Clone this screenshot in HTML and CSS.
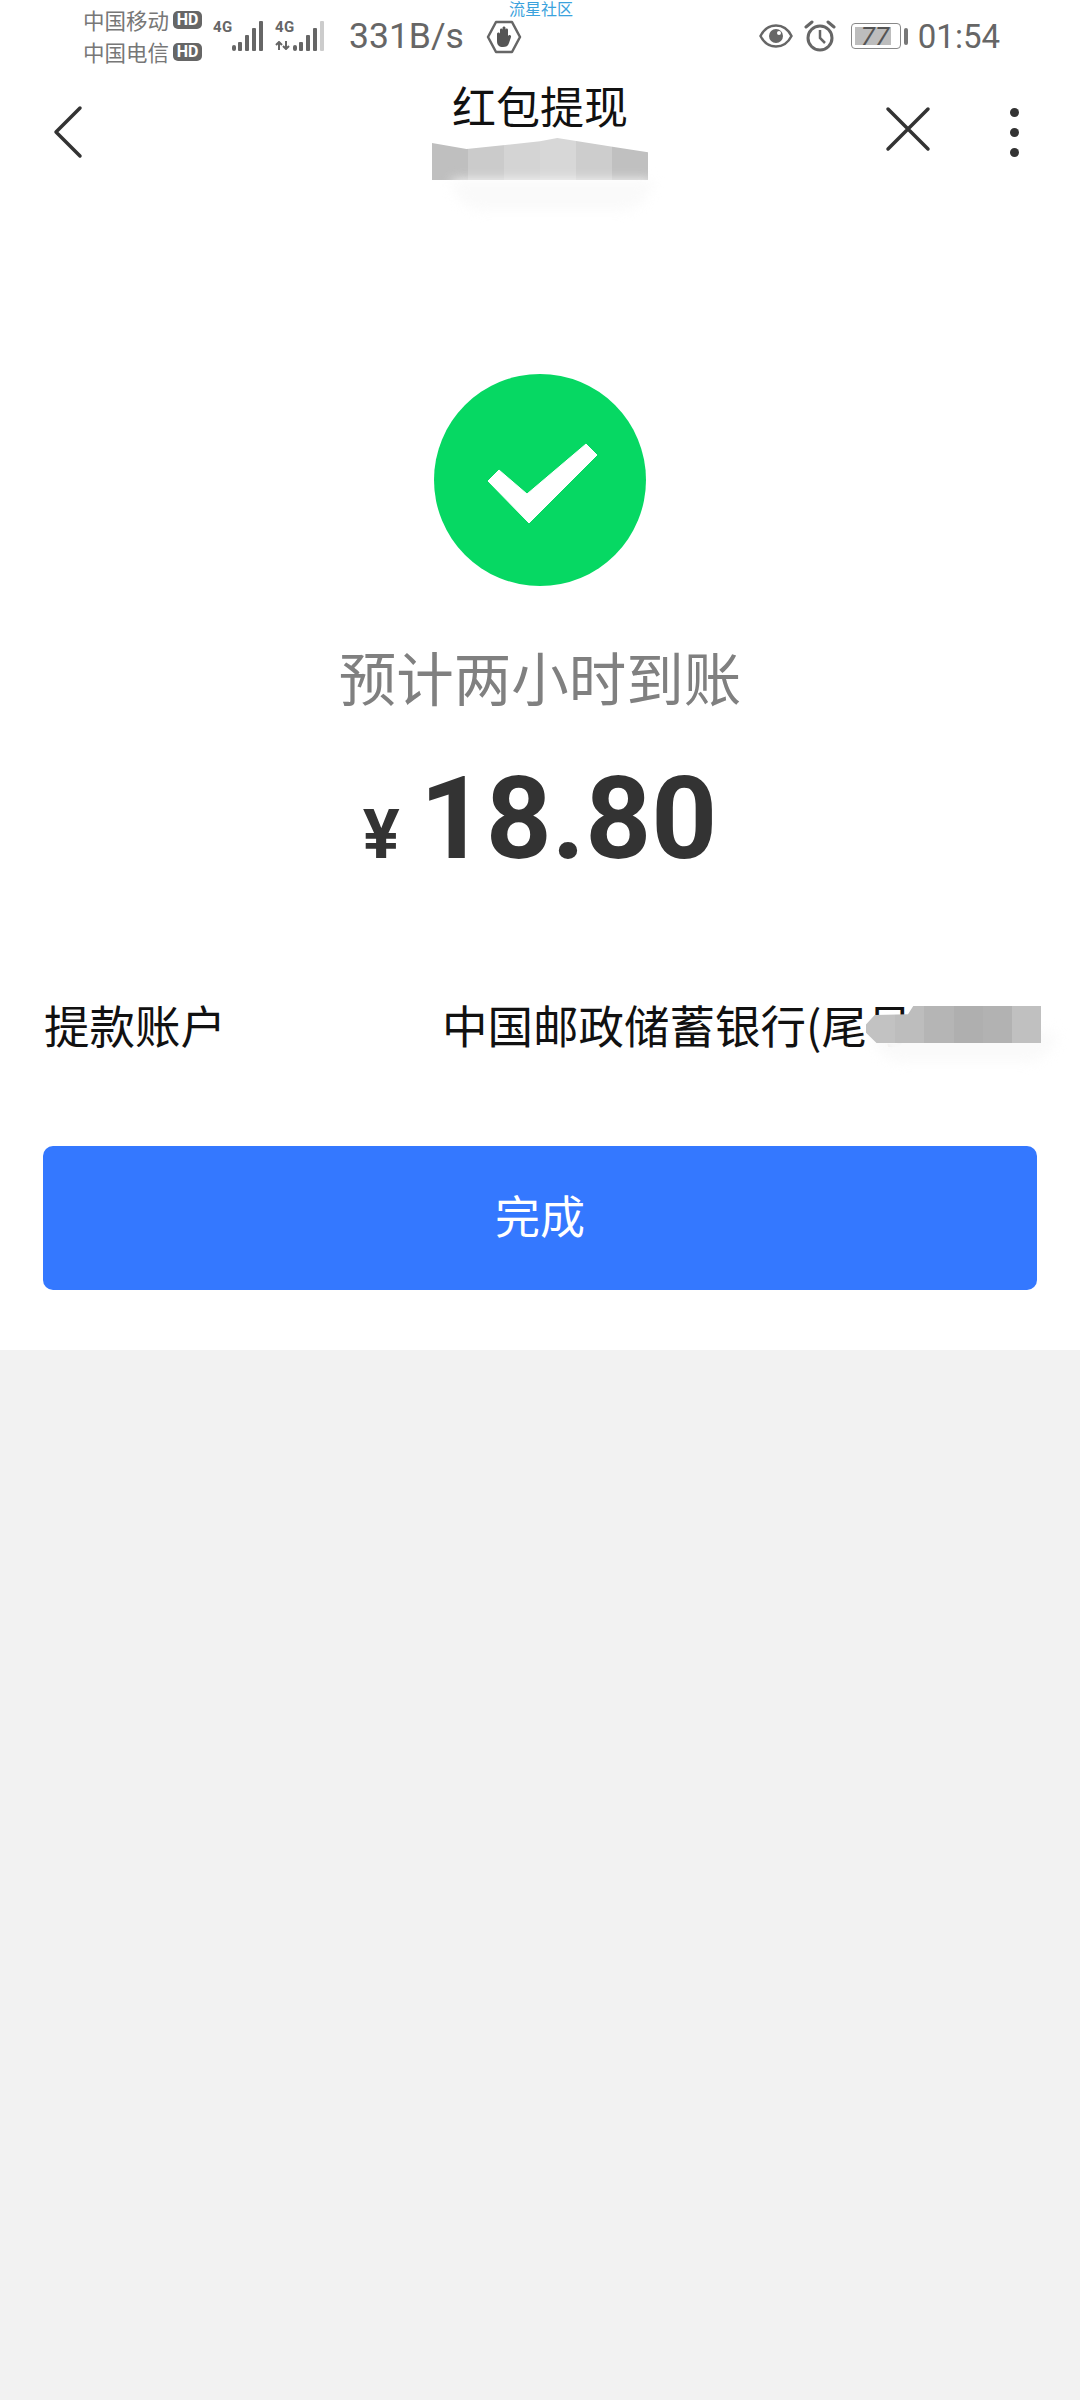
FILE: index.html
```html
<!DOCTYPE html>
<html>
<head>
  <title>红包提现</title>
  <meta name="viewport" content="width=device-width, initial-scale=1.0">
  <link rel="stylesheet" href="styles.css">
</head>
<body>
  <div class="sheet">
    <div class="watermark">流星社区</div>
    <div class="status-bar">
      <div class="carriers">
        <div class="carrier">中国移动<span class="hd">HD</span></div>
        <div class="carrier">中国电信<span class="hd">HD</span></div>
      </div>
      <div class="signal">
        <span class="net">4G</span>
        <svg width="32" height="32" viewBox="0 0 32 32">
          <rect x="1" y="26" width="4" height="6" rx="2" fill="#666"/>
          <rect x="7" y="23" width="4" height="9" rx="1" fill="#666"/>
          <rect x="14" y="16" width="4" height="16" rx="1" fill="#666"/>
          <rect x="21" y="9" width="4" height="23" rx="1" fill="#666"/>
          <rect x="28" y="2" width="4" height="30" rx="1" fill="#666"/>
        </svg>
      </div>
      <div class="signal signal-two">
        <span class="net">4G</span>
        <svg class="arrows" width="17" height="9" viewBox="0 0 17 9">
          <path d="M4 9V1M1 4l3-3 3 3M11 0v8M8 5l3 3 3-3" stroke="#666" stroke-width="2" fill="none"/>
        </svg>
        <svg width="32" height="32" viewBox="0 0 32 32">
          <rect x="1" y="26" width="4" height="6" rx="2" fill="#666"/>
          <rect x="7" y="23" width="4" height="9" rx="1" fill="#666"/>
          <rect x="14" y="16" width="4" height="16" rx="1" fill="#666"/>
          <rect x="21" y="9" width="4" height="23" rx="1" fill="#666"/>
          <rect x="28" y="2" width="4" height="30" rx="1" fill="#ccc"/>
        </svg>
      </div>
      <div class="speed">331B/s</div>
      <svg class="hand" width="36" height="34" viewBox="0 0 36 34">
        <path d="M10 2h16l8 15-8 15H10L2 17z" fill="none" stroke="#666" stroke-width="2.5" stroke-linejoin="round"/>
        <path d="M11 14c0-2 3-2 3 0v-4c0-2 2.500-2 2.500 0V8c0-2 3-2 3 0v2c0-2 2.500-2 2.500 0v6c1-2 3.500-1 3 1l-2 6c-1 3-3 4-6 4-4 0-6-2-6-6z" fill="#555"/>
      </svg>
      <div class="status-right">
        <svg class="eye" width="34" height="26" viewBox="0 0 34 26">
          <path d="M1.500 13C5 6 10.500 2.500 17 2.500S29 6 32.500 13C29 20 23.500 23.500 17 23.500S5 20 1.500 13z" fill="none" stroke="#666" stroke-width="2.500"/>
          <circle cx="17" cy="13" r="7" fill="#666"/>
          <circle cx="20" cy="10" r="2" fill="#fff"/>
        </svg>
        <svg class="alarm" width="32" height="32" viewBox="0 0 32 32">
          <circle cx="16" cy="18" r="12" fill="none" stroke="#666" stroke-width="3"/>
          <path d="M16 10v8l5 5" fill="none" stroke="#666" stroke-width="2.500"/>
          <path d="M2 7l6-5M30 7l-6-5" stroke="#666" stroke-width="3" stroke-linecap="round"/>
        </svg>
        <div class="battery">
          <div class="battery-fill"></div>
          <span class="battery-text">77</span>
        </div>
        <div class="battery-nub"></div>
        <div class="clock">01:54</div>
      </div>
    </div>

    <div class="nav">
      <svg class="back" width="30" height="54" viewBox="0 0 30 54">
        <path d="M27 3L3 27l24 24" fill="none" stroke="#333" stroke-width="3.500" stroke-linecap="round" stroke-linejoin="round"/>
      </svg>
      <div class="nav-title">
        <div class="title">红包提现</div>
        <div class="mosaic mosaic-title">
          <i style="background:#bfbfbf"></i>
          <i style="background:#cbcbcb"></i>
          <i style="background:#d4d4d4"></i>
          <i style="background:#d7d7d7"></i>
          <i style="background:#cdcdcd"></i>
          <i style="background:#c0c0c0"></i>
        </div>
        <div class="smudge smudge-title"></div>
      </div>
      <div class="nav-actions">
        <svg width="46" height="46" viewBox="0 0 46 46">
          <path d="M3 3l40 40M43 3L3 43" stroke="#333" stroke-width="3.500" stroke-linecap="round"/>
        </svg>
        <div class="dots"><b></b><b></b><b></b></div>
      </div>
    </div>

    <svg class="check" width="212" height="212" viewBox="0 0 212 212">
      <circle cx="106" cy="106" r="106" fill="#06d863"/>
      <path d="M54 107l11-11 28 24 59-50 11 11-68 68z" fill="#fff" stroke="#fff" stroke-width="1" stroke-linejoin="round"/>
    </svg>
    <div class="notice">预计两小时到账</div>
    <div class="amount"><span class="yen">¥</span><span class="sum">18.80</span></div>

    <div class="account">
      <div class="account-label">提款账户</div>
      <div class="account-value">中国邮政储蓄银行(尾号
        <div class="smudge smudge-bank"></div>
        <div class="mosaic mosaic-bank">
          <i style="background:#c2c2c2"></i>
          <i style="background:#bdbdbd"></i>
          <i style="background:#b5b5b5"></i>
          <i style="background:#afafaf"></i>
          <i style="background:#b2b2b2"></i>
          <i style="background:#c0c0c0"></i>
        </div>
      </div>
    </div>

    <button class="done" type="button">完成</button>
  </div>
</body>
</html>
```

FILE: styles.css
```css
html, body {
  margin: 0;
  padding: 0;
  height: 100%;
  background: #f2f2f2;
  font-family: Roboto, "Noto Sans CJK SC", sans-serif;
  overflow: hidden;
}
.sheet {
  position: relative;
  height: 1350px;
  background: #fff;
  display: flex;
  flex-direction: column;
  align-items: center;
}
.watermark {
  position: absolute;
  top: -2px;
  left: 509px;
  font-size: 16px;
  line-height: 20px;
  color: #3ba2dd;
  font-family: "Noto Sans CJK SC", sans-serif;
}

/* status bar */
.status-bar {
  width: 100%;
  height: 72px;
  box-sizing: border-box;
  padding: 0 80px 0 83px;
  display: flex;
  align-items: center;
  color: #666;
}
.carriers {
  width: 130px;
}
.carrier {
  display: flex;
  align-items: center;
  font-size: 21.500px;
  line-height: 32px;
  color: #777;
  font-family: "Noto Sans CJK SC", sans-serif;
}
.hd {
  margin-left: 4px;
  width: 29px;
  height: 18px;
  border-radius: 5px;
  background: #666;
  color: #fff;
  font: bold 16px/18px Roboto, sans-serif;
  text-align: center;
}
.signal {
  position: relative;
  width: 50px;
  height: 33px;
  margin-top: -3px;
  display: flex;
  justify-content: flex-end;
  align-items: flex-end;
}
.signal-two {
  width: 49px;
  margin-left: 12px;
}
.net {
  position: absolute;
  left: 0;
  top: 2px;
  font-size: 15px;
  line-height: 15px;
  font-weight: bold;
  letter-spacing: 0.500px;
  color: #666;
}
.arrows {
  position: absolute;
  left: 0;
  bottom: 1px;
}
.speed {
  margin-left: 25px;
  font-size: 35.500px;
  color: #666;
}
.hand {
  margin: 2px 0 0 22px;
}
.status-right {
  margin-left: auto;
  display: flex;
  align-items: center;
}
.alarm {
  margin-left: 11px;
}
.battery {
  position: relative;
  width: 50px;
  height: 26px;
  margin-left: 15px;
  box-sizing: border-box;
  border: 1.500px solid #888;
  border-radius: 4px;
  padding: 3px;
}
.battery-fill {
  width: 36px;
  height: 100%;
  background: #bdbdbd;
}
.battery-text {
  position: absolute;
  left: 9px;
  top: -3px;
  font-size: 26px;
  line-height: 30px;
  font-style: italic;
  color: #555;
}
.battery-nub {
  width: 4px;
  height: 17px;
  margin-left: 3px;
  border-radius: 2px;
  background: #777;
}
.clock {
  margin-left: 10px;
  font-size: 33px;
  color: #666;
}

/* nav */
.nav {
  width: 100%;
  height: 110px;
  display: grid;
  grid-template-columns: 1fr 216px 1fr;
}
.back {
  margin: 33px 0 0 53px;
}
.nav-title {
  position: relative;
  display: flex;
  flex-direction: column;
  align-items: center;
}
.title {
  margin-top: 3px;
  font-size: 44px;
  line-height: 60px;
  color: #111;
  font-family: "Noto Sans CJK SC", sans-serif;
}
.mosaic {
  display: flex;
}
.mosaic i {
  flex: 1;
}
.mosaic-title {
  width: 216px;
  height: 42px;
  margin-top: 3px;
  clip-path: polygon(0 12%, 16% 26%, 50% 8%, 58% 0, 85% 22%, 100% 34%, 100% 100%, 0 100%);
}
.smudge {
  position: absolute;
  background: #fafafa;
  filter: blur(6px);
}
.smudge-title {
  left: 20px;
  top: 108px;
  width: 200px;
  height: 30px;
  border-radius: 0 0 60px 60px;
}
.nav-actions {
  display: flex;
  justify-content: flex-end;
  gap: 79px;
  padding: 34px 61px 0 0;
}
.dots {
  width: 9px;
  display: flex;
  flex-direction: column;
  gap: 11px;
  padding-top: 2px;
}
.dots b {
  width: 9px;
  height: 9px;
  border-radius: 50%;
  background: #333;
}

/* result */
.check {
  margin-top: 192px;
  flex-shrink: 0;
}
.notice {
  margin-top: 52px;
  font-size: 57.500px;
  line-height: 76px;
  color: #808080;
  font-family: "Noto Sans CJK SC", sans-serif;
}
.amount {
  margin-top: 40px;
  display: flex;
  align-items: baseline;
  color: #333;
  font-weight: bold;
  line-height: 130px;
}
.yen {
  font-size: 69px;
  margin-right: 20px;
}
.sum {
  font-size: 115px;
}

/* account row */
.account {
  width: 100%;
  box-sizing: border-box;
  margin-top: 94px;
  padding: 0 44px;
  display: flex;
  justify-content: space-between;
  font-size: 45.500px;
  line-height: 60px;
  color: #111;
  font-family: "Noto Sans CJK SC", sans-serif;
}
.account-value {
  position: relative;
  width: 594px;
  white-space: nowrap;
}
.mosaic-bank {
  position: absolute;
  left: 424px;
  top: 12px;
  width: 175px;
  height: 37px;
  clip-path: polygon(0 50%, 5% 24%, 24% 22%, 27% 0, 100% 0, 100% 100%, 6% 100%, 0 72%);
}
.smudge-bank {
  left: 430px;
  top: 38px;
  width: 185px;
  height: 30px;
  border-radius: 0 0 40px 40px;
}

/* button */
.done {
  margin-top: 92px;
  width: 994px;
  height: 144px;
  padding-bottom: 8px;
  flex-shrink: 0;
  border: 0;
  border-radius: 10px;
  background: #3478ff;
  color: #fff;
  font-size: 45px;
  font-family: "Noto Sans CJK SC", sans-serif;
}
```
